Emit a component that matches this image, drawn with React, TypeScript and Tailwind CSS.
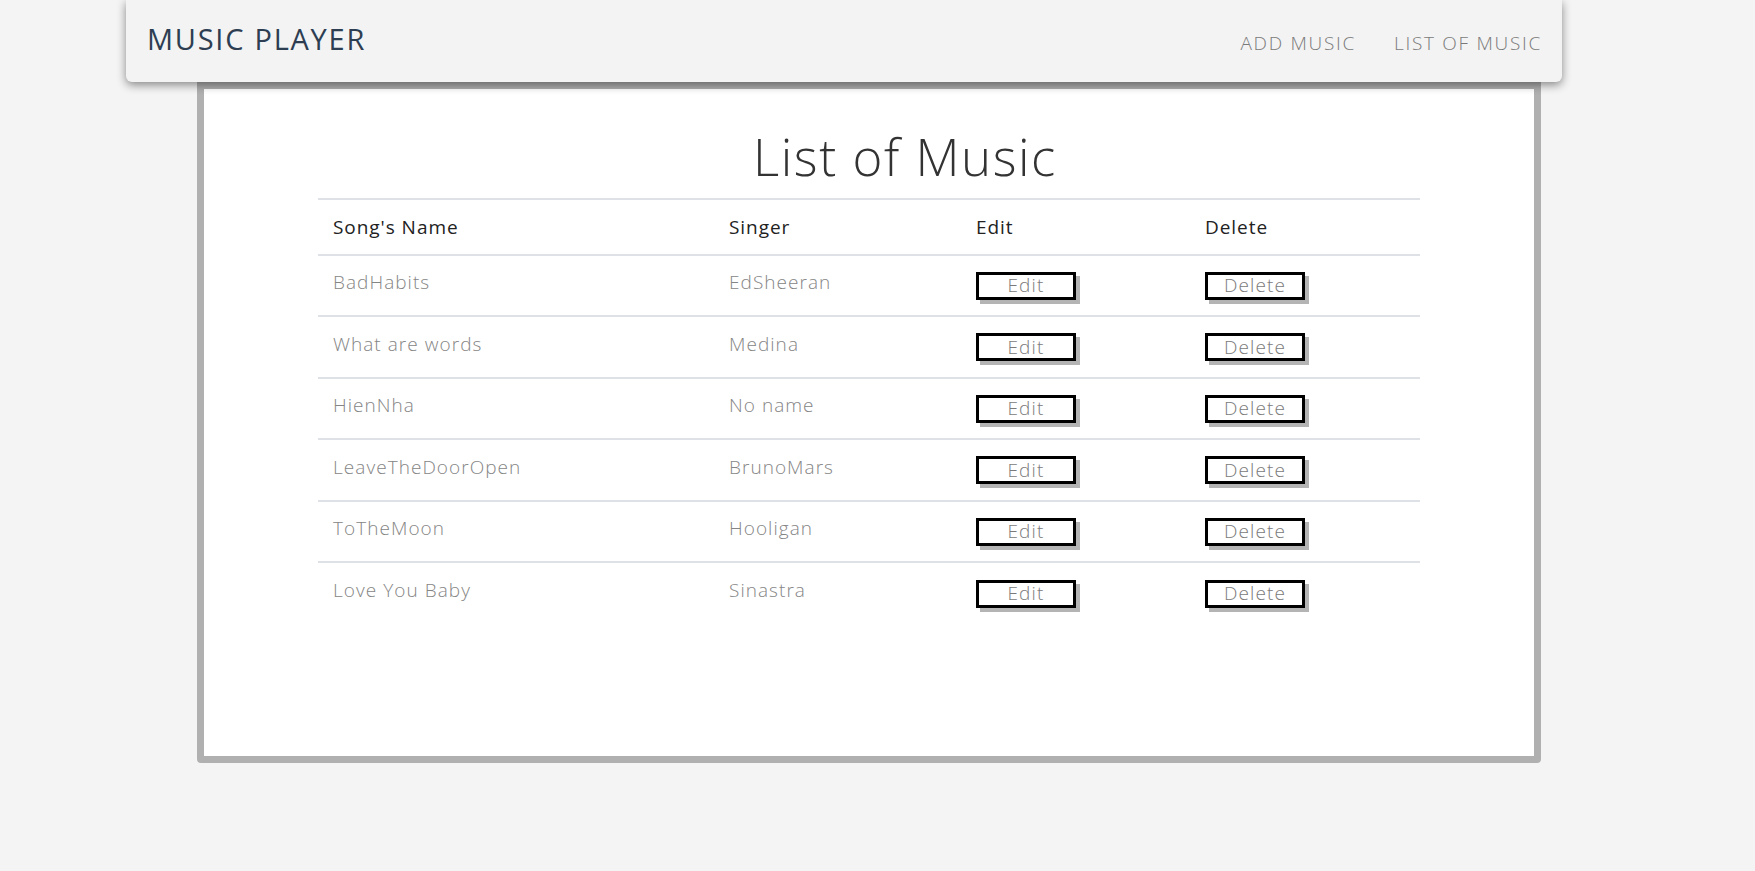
import React from 'react';

const songs = [
  { name: 'BadHabits', singer: 'EdSheeran' },
  { name: 'What are words', singer: 'Medina' },
  { name: 'HienNha', singer: 'No name' },
  { name: 'LeaveTheDoorOpen', singer: 'BrunoMars' },
  { name: 'ToTheMoon', singer: 'Hooligan' },
  { name: 'Love You Baby', singer: 'Sinastra' },
];

const font = { fontFamily: '"Open Sans", "Noto Sans", sans-serif' };

const ActionButton = ({ label }: { label: string }) => (
  <button className="w-[100px] h-[28px] border-[3px] border-black bg-white text-[#7a7a7a] text-[19px] font-light leading-none tracking-[0.06em] shadow-[4px_4px_0_#b4b4b4]">
    {label}
  </button>
);

export default function App() {
  return (
    <div className="min-h-screen h-[871px] bg-[#f4f4f4] overflow-hidden" style={font}>
      {/* top navbar */}
      <header className="relative z-10 ml-[126px] w-[1436px] h-[82px] bg-[#f3f3f3] rounded-b-md shadow-[0_3px_10px_rgba(0,0,0,0.45)] flex items-center justify-between pl-[21px] pr-[20px]">
        <h1 className="text-[29px] font-normal text-[#2e3e52] tracking-[0.06em] leading-none pb-[6px]">MUSIC PLAYER</h1>
        <nav className="flex items-center gap-[38px] pt-[5px]">
          <a className="text-[19px] font-light text-[#7a7a7a] tracking-[0.09em]">ADD MUSIC</a>
          <a className="text-[19px] font-light text-[#7a7a7a] tracking-[0.09em]">LIST OF MUSIC</a>
        </nav>
      </header>

      {/* main card */}
      <main className="ml-[197px] w-[1344px] h-[681px] bg-white border-[7px] border-[#b0b0b0] rounded-b-[4px]">
        <h2 className="pt-[42px] pl-[72px] text-center text-[51px] font-light text-[#333] leading-none tracking-[0.03em]">
          List of Music
        </h2>
        <div className="mt-[16px] w-[1102px] mx-auto border-t-2 border-[#dee2e6]">
          <div className="grid grid-cols-[396px_247px_229px_230px] h-[56px] items-center border-b-2 border-[#dee2e6] text-[19px] text-[#222] tracking-[0.05em]">
            <div className="pl-[15px]">Song's Name</div>
            <div className="pl-[15px]">Singer</div>
            <div className="pl-[15px]">Edit</div>
            <div className="pl-[15px]">Delete</div>
          </div>
          {songs.map((s, i) => (
            <div
              key={s.name}
              className={`grid grid-cols-[396px_247px_229px_230px] h-[61.4px] items-center text-[19px] font-light text-[#858585] tracking-[0.055em] ${
                i < songs.length - 1 ? 'border-b-2 border-[#dee2e6]' : ''
              }`}
            >
              <div className="pl-[15px] -mt-[6px]">{s.name}</div>
              <div className="pl-[15px] -mt-[6px]">{s.singer}</div>
              <div className="pl-[15px]">
                <ActionButton label="Edit" />
              </div>
              <div className="pl-[15px]">
                <ActionButton label="Delete" />
              </div>
            </div>
          ))}
        </div>
      </main>
    </div>
  );
}
